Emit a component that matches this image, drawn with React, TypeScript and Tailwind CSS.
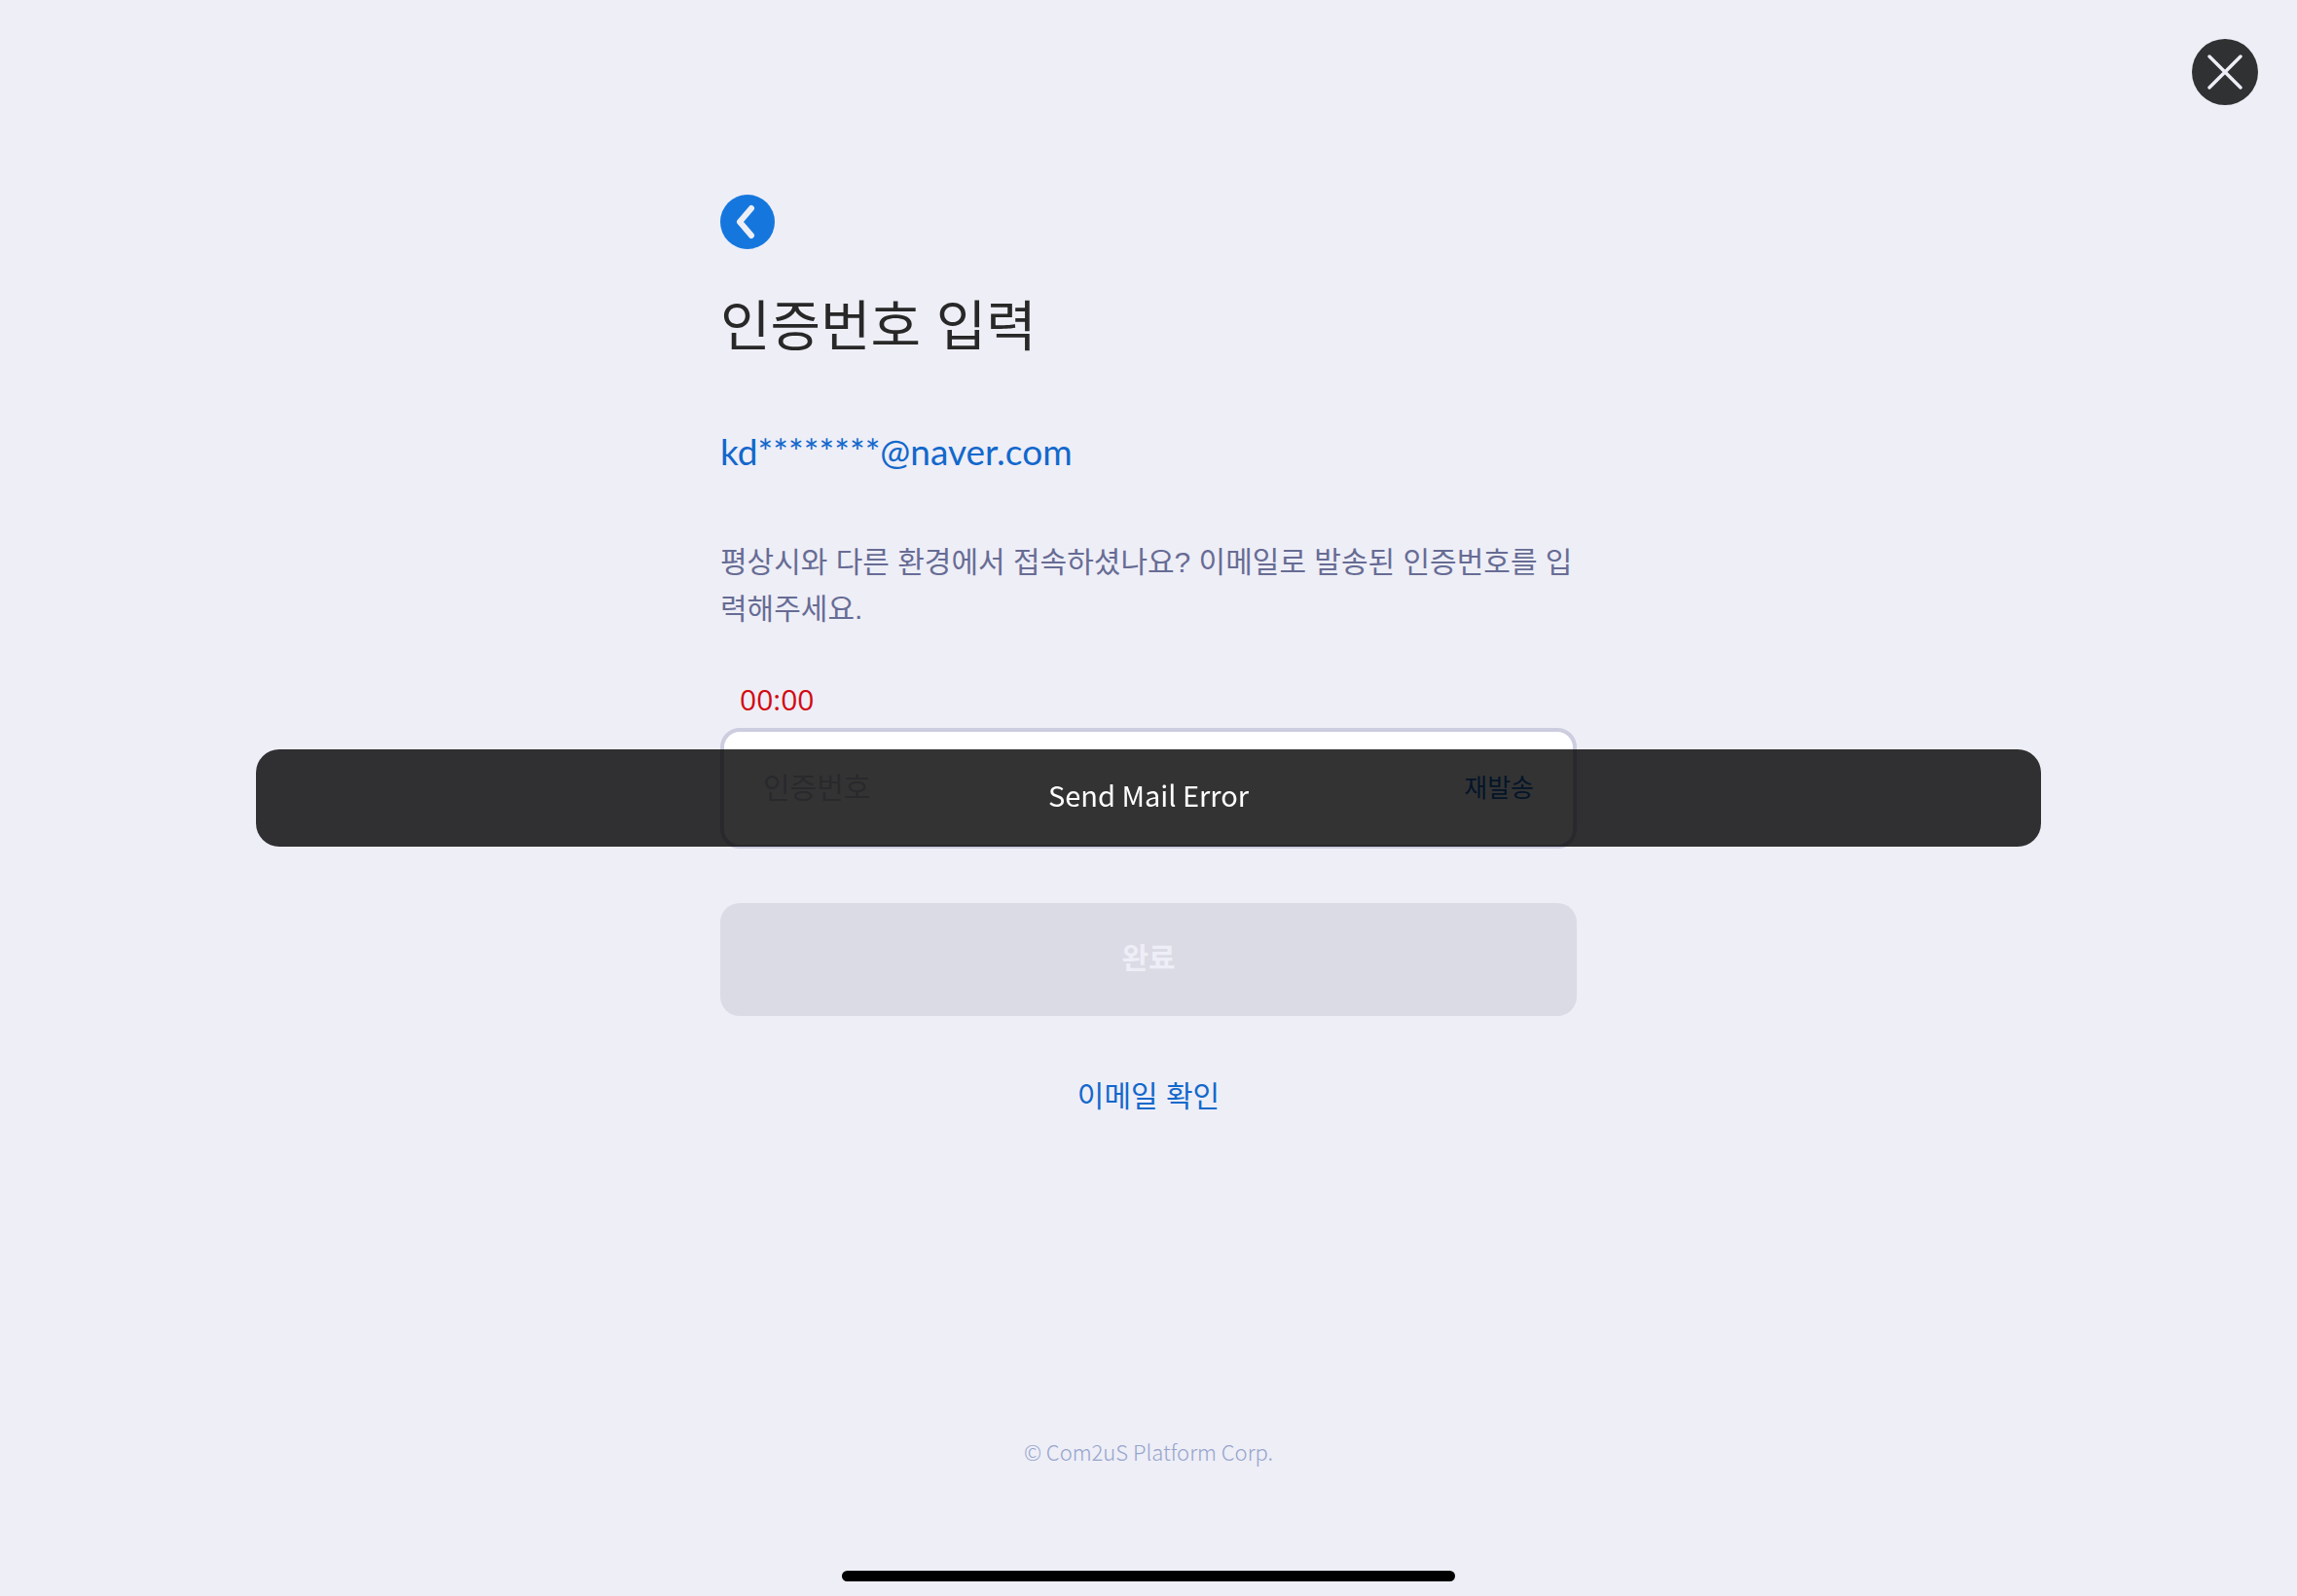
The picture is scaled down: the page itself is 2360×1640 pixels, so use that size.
import { useState } from "react";

function CloseIcon() {
  return (
    <svg viewBox="0 0 68 68" className="size-17" aria-hidden="true">
      <path d="M18 18L50 50M50 18L18 50" fill="none" stroke="#eeeef7" strokeWidth="3.4" strokeLinecap="round" />
    </svg>
  );
}

function BackIcon() {
  return (
    <svg viewBox="0 0 56 56" className="size-14" aria-hidden="true">
      <path
        d="M32 14L20 28L32 42"
        fill="none"
        stroke="#eeeef7"
        strokeWidth="6"
        strokeLinecap="round"
        strokeLinejoin="round"
      />
    </svg>
  );
}

function Toast({ message }: { message: string }) {
  return (
    <div className="pointer-events-none fixed inset-0 flex items-center justify-center">
      <div
        role="alert"
        className="w-full max-w-[1834px] rounded-3xl bg-black/80 pt-[22px] pb-[30px] text-center font-['Noto_Sans_CJK_KR',sans-serif] text-[29px] leading-[48px] text-white"
      >
        {message}
      </div>
    </div>
  );
}

export default function App() {
  const [code, setCode] = useState("");

  return (
    <div className="flex min-h-screen flex-col bg-[#eeeef7] font-['Liberation_Sans','Noto_Sans_CJK_KR',sans-serif]">
      <header className="flex justify-end px-10 pt-10">
        <button type="button" aria-label="닫기" className="size-17 rounded-full bg-[#303132]">
          <CloseIcon />
        </button>
      </header>

      <main className="mx-auto mt-[92px] flex w-full max-w-[880px] flex-col">
        <button type="button" aria-label="뒤로" className="size-14 rounded-full bg-[#1577de]">
          <BackIcon />
        </button>
        <h1 className="mt-[38px] text-[56px] leading-[84px] text-[#282828]">인증번호 입력</h1>
        <p className="mt-[58px] font-['Lato','Noto_Sans_CJK_KR',sans-serif] text-[37px] leading-[56px] text-[#1268cb]">
          kd********@naver.com
        </p>
        <p className="mt-[62px] text-[30px] leading-[48px] break-all text-[#676c94]">
          평상시와 다른 환경에서 접속하셨나요? 이메일로 발송된 인증번호를 입력해주세요.
        </p>

        <form onSubmit={(e) => e.preventDefault()} className="mt-[46px] flex flex-col">
          <label
            htmlFor="code"
            className="px-5 font-['Open_Sans','Noto_Sans_CJK_KR',sans-serif] text-[30px] leading-[46px] text-[#d20a11]"
          >
            00:00
          </label>
          <div className="mt-[6px] flex h-[124px] items-center rounded-[20px] border-4 border-[#cdcde0] bg-white px-10">
            <input
              id="code"
              type="text"
              inputMode="numeric"
              value={code}
              onChange={(e) => setCode(e.target.value)}
              placeholder="인증번호"
              className="h-full min-w-0 flex-1 bg-transparent text-[30px] text-[#282828] outline-none placeholder:text-[#cdcde0]"
            />
            <button type="button" className="text-[26px] leading-[48px] text-[#1268cb]">
              재발송
            </button>
          </div>
          <button
            type="submit"
            disabled
            className="mt-14 h-[116px] rounded-[20px] bg-[#dbdbe5] pb-1 text-[30px] font-bold text-[#eeeef7]"
          >
            완료
          </button>
        </form>

        <a href="#email" className="mt-[59px] self-center text-[30px] leading-[48px] text-[#1268cb]">
          이메일 확인
        </a>
      </main>

      <footer className="mt-auto flex flex-col items-center pb-[15px]">
        <p className="font-['Noto_Sans_CJK_KR',sans-serif] text-[22px] leading-8 font-light text-[#95a4cb]">
          © Com2uS Platform Corp.
        </p>
        <div className="mt-[107px] h-[11px] w-[630px] rounded-full bg-black" />
      </footer>

      <Toast message="Send Mail Error" />
    </div>
  );
}
